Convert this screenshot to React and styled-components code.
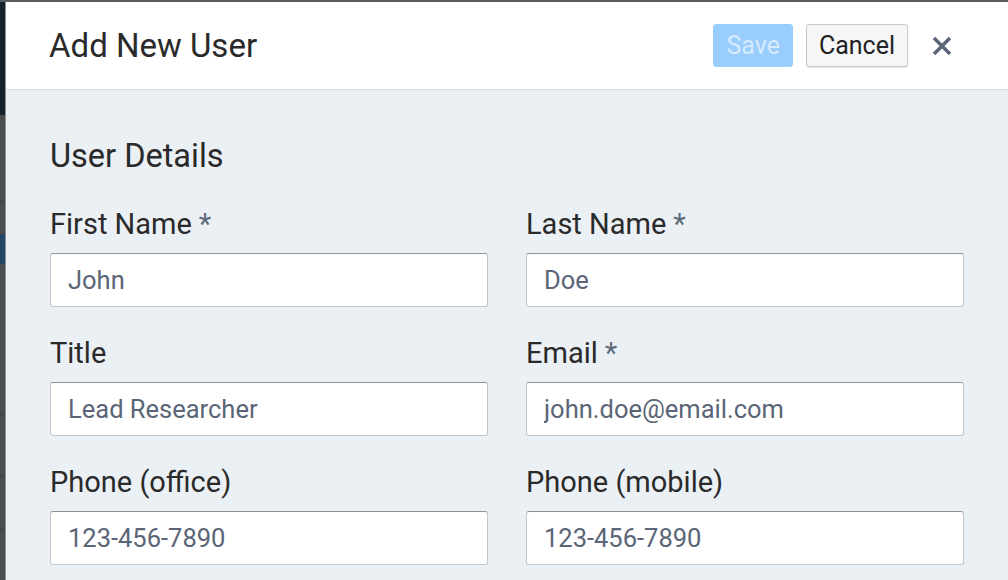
import React from "react";
import styled, { createGlobalStyle } from "styled-components";

const GlobalStyle = createGlobalStyle`
  html, body {
    margin: 0;
    padding: 0;
    height: 100%;
    overflow: hidden;
  }
  body {
    font-family: Roboto, "Liberation Sans", Arial, sans-serif;
    background: #4a4c50;
  }
`;

const Page = styled.div`
  display: flex;
  width: 1008px;
  height: 580px;
  border-top: 2px solid #5a5c60;
  box-sizing: border-box;
  overflow: hidden;
`;

const Backdrop = styled.div`
  width: 5px;
  flex-shrink: 0;
  display: flex;
  flex-direction: column;
`;

const Band = styled.div`
  height: ${(p) => p.h}px;
  background: ${(p) => p.bg};
  border-bottom: ${(p) => (p.line ? "1px solid #3c3e42" : "none")};
  flex-shrink: 0;
`;

const Modal = styled.div`
  flex: 1;
  display: flex;
  flex-direction: column;
  background: #ebf0f4;
  border-left: 1px solid #8e9297;
  border-right: 2px solid #6a6d72;
`;

const Header = styled.div`
  height: 87px;
  flex-shrink: 0;
  display: flex;
  align-items: center;
  padding: 0 52px 0 43px;
  background: #ffffff;
  border-bottom: 1px solid #d6dce2;
`;

const Title = styled.h1`
  flex: 1;
  margin: 0;
  font-size: 33px;
  font-weight: 400;
  color: #2a2a2a;
`;

const Actions = styled.div`
  display: flex;
  align-items: center;
  gap: 13px;
`;

const Button = styled.button`
  height: 43px;
  padding: 0 12px;
  font-family: inherit;
  font-size: 25px;
  border-radius: 3px;
  cursor: pointer;
  border: 1px solid ${(p) => (p.primary ? "#99cdfd" : "#c8c9cb")};
  background: ${(p) => (p.primary ? "#99cdfd" : "#f5f6f7")};
  color: ${(p) => (p.primary ? "#d7ebfe" : "#222222")};
  box-shadow: ${(p) => (p.primary ? "none" : "0 1px 1px rgba(0,0,0,0.12)")};
`;

const CloseButton = styled.button`
  margin: 0 2px 0 9px;
  width: 24px;
  height: 24px;
  padding: 0;
  border: none;
  background: none;
  display: flex;
  align-items: center;
  justify-content: center;
  cursor: pointer;
`;

const Body = styled.div`
  padding: 47px 44px 0 44px;
`;

const SectionTitle = styled.h2`
  margin: 0 0 32px;
  font-size: 32.5px;
  line-height: 38px;
  font-weight: 400;
  color: #2a2a2a;
`;

const Grid = styled.div`
  display: grid;
  grid-template-columns: 438px 438px;
  column-gap: 38px;
  row-gap: 29px;
`;

const Field = styled.div`
  display: flex;
  flex-direction: column;
`;

const Label = styled.label`
  font-size: 29px;
  line-height: 34px;
  color: #2a2a2a;
  margin-bottom: 12px;
`;

const Star = styled.span`
  color: #5d6878;
  margin-left: 7px;
`;

const Input = styled.input`
  box-sizing: border-box;
  height: 54px;
  width: 100%;
  padding: 0 17px;
  font-family: inherit;
  font-size: 25.5px;
  color: #5a6577;
  background: #ffffff;
  border: 1px solid #c2c5c9;
  border-top-color: #8f9297;
  border-radius: 3px;
  outline: none;
`;

const fields = [
  { label: "First Name", required: true, value: "John" },
  { label: "Last Name", required: true, value: "Doe" },
  { label: "Title", value: "Lead Researcher" },
  { label: "Email", required: true, value: "john.doe@email.com" },
  { label: "Phone (office)", value: "123-456-7890" },
  { label: "Phone (mobile)", value: "123-456-7890" },
];

const CloseIcon = () => (
  <svg width="20" height="20" viewBox="0 0 20 20">
    <path
      d="M2 2 L18 18 M18 2 L2 18"
      stroke="#5a6577"
      strokeWidth="3.4"
      strokeLinecap="butt"
    />
  </svg>
);

const App = () => {
  return (
    <Page>
      <GlobalStyle />
      <Backdrop>
        <Band h={113} bg="#16222b" />
        <Band h={86} bg="#4a4c50" line />
        <Band h={32} bg="#4a4c50" />
        <Band h={30} bg="#244766" />
        <Band h={150} bg="#4a4c50" line />
        <Band h={60} bg="#4a4c50" line />
        <Band h={53} bg="#4a4c50" line />
        <Band h={60} bg="#4a4c50" />
      </Backdrop>
      <Modal>
        <Header>
          <Title>Add New User</Title>
          <Actions>
            <Button primary disabled>
              Save
            </Button>
            <Button>Cancel</Button>
            <CloseButton aria-label="Close">
              <CloseIcon />
            </CloseButton>
          </Actions>
        </Header>
        <Body>
          <SectionTitle>User Details</SectionTitle>
          <Grid>
            {fields.map((f) => (
              <Field key={f.label}>
                <Label>
                  {f.label}
                  {f.required && <Star>*</Star>}
                </Label>
                <Input defaultValue={f.value} />
              </Field>
            ))}
          </Grid>
        </Body>
      </Modal>
    </Page>
  );
};

export default App;
